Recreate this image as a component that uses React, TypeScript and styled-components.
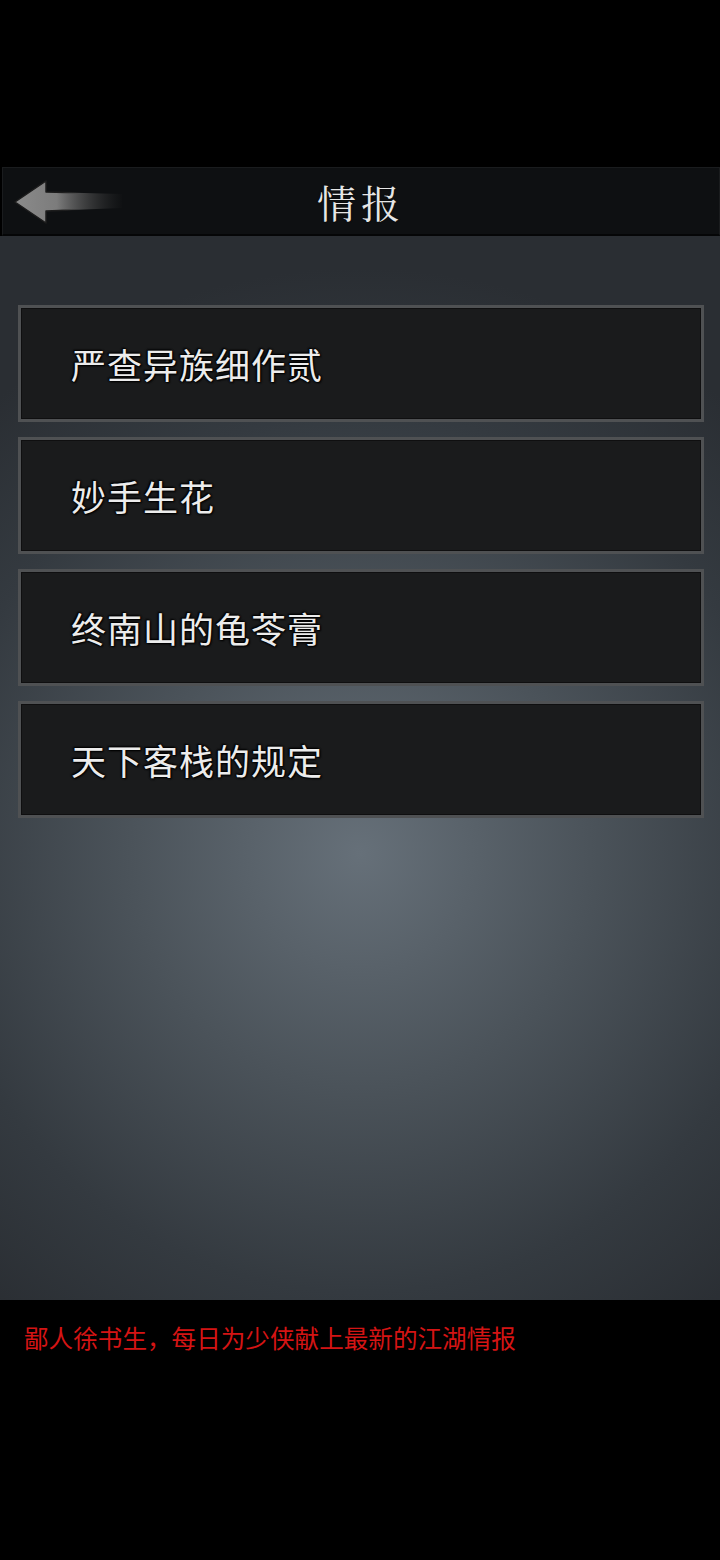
import React from "react";
import styled, { createGlobalStyle } from "styled-components";

const Global = createGlobalStyle`
  html, body { margin: 0; padding: 0; background: #000; }
  body { font-family: "Noto Sans CJK SC", "Noto Sans", sans-serif; }
`;

const Page = styled.div`
  width: 720px;
  height: 1560px;
  background: #000;
  display: flex;
  flex-direction: column;
`;

const TopSpace = styled.div`
  height: 167px;
  background: #000;
`;

const Header = styled.header`
  height: 69px;
  box-sizing: border-box;
  margin: 0 0 0 2px;
  background: #0e1012;
  border: 1px solid #1a1c1e;
  border-bottom: 2px solid #050607;
  display: flex;
  align-items: center;
  justify-content: center;
  position: relative;
`;

const Back = styled.button`
  position: absolute;
  left: 9px;
  top: 11px;
  width: 112px;
  height: 46px;
  border: 0;
  padding: 0;
  background: none;
  cursor: pointer;
`;

const Title = styled.h1`
  margin: 0;
  font-family: "AR PL UKai CN", "Noto Serif CJK SC", "Noto Sans CJK SC", serif;
  font-weight: 400;
  font-size: 39px;
  letter-spacing: 5px;
  color: #e6e6e6;
  line-height: 1;
  text-shadow: 0 0 2px #000;
`;

const Body = styled.main`
  flex: 1;
  background: radial-gradient(ellipse 80% 55% at 50% 58%, #667079 0%, #4b535a 40%, #343a40 75%, #2a2e33 100%);
  padding: 69px 16px 0 18px;
  display: flex;
  flex-direction: column;
  gap: 15px;
`;

const Card = styled.div`
  height: 117px;
  box-sizing: border-box;
  background: #1a1b1c;
  border: 3px solid #4f5153;
  box-shadow: inset 0 0 0 1px #0f0f10;
  display: flex;
  align-items: center;
  padding-left: 50px;
`;

const CardText = styled.span`
  font-size: 35px;
  color: #ececec;
  letter-spacing: 1px;
  text-shadow: 0 0 2px #000, 0 0 2px #000, 1px 1px 2px #000, -1px -1px 2px #000;
`;

const Footer = styled.footer`
  height: 260px;
  background: #000;
  padding: 21px 0 0 24px;
  box-sizing: border-box;
`;

const Notice = styled.p`
  margin: 0;
  color: #d41414;
  font-size: 24.6px;
  line-height: 32px;
`;

const items = ["严查异族细作贰", "妙手生花", "终南山的龟苓膏", "天下客栈的规定"];

export default function App() {
  return (
    <Page>
      <Global />
      <TopSpace />
      <Header>
        <Back aria-label="返回">
          <svg width="112" height="46" viewBox="0 0 112 46">
            <defs>
              <linearGradient id="ag" x1="0" y1="0" x2="112" y2="0" gradientUnits="userSpaceOnUse">
                <stop offset="0" stopColor="#8c8c8c" />
                <stop offset="0.4" stopColor="#7c7c7c" />
                <stop offset="1" stopColor="#3a3a3a" stopOpacity="0" />
              </linearGradient>
              <linearGradient id="sg" x1="0" y1="0" x2="112" y2="0" gradientUnits="userSpaceOnUse">
                <stop offset="0" stopColor="#1c1c1c" />
                <stop offset="0.45" stopColor="#1c1c1c" />
                <stop offset="0.6" stopColor="#1c1c1c" stopOpacity="0" />
              </linearGradient>
            </defs>
            <path
              d="M3 23 L34 2 L34 13 L110 15 L110 29 L34 32 L34 44 Z"
              fill="url(#ag)"
              stroke="url(#sg)"
              strokeWidth="1.5"
              strokeLinejoin="round"
            />
          </svg>
        </Back>
        <Title>情报</Title>
      </Header>
      <Body>
        {items.map((t) => (
          <Card key={t}>
            <CardText>{t}</CardText>
          </Card>
        ))}
      </Body>
      <Footer>
        <Notice>鄙人徐书生，每日为少侠献上最新的江湖情报</Notice>
      </Footer>
    </Page>
  );
}
